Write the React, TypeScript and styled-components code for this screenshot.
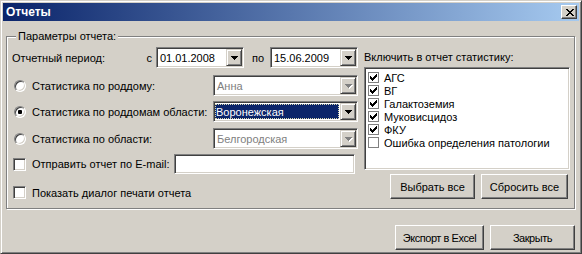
import * as React from 'react'
import styled, { createGlobalStyle, css } from 'styled-components'

const GlobalStyle = createGlobalStyle`
  html, body { margin: 0; padding: 0; background: #d4d0c8; }
  body {
    font-family: "Liberation Sans", Arial, sans-serif;
    font-size: 11px;
    color: #000;
  }
  * { box-sizing: border-box; }
`

const raised = css`
  border: 1px solid;
  border-color: #fff #404040 #404040 #fff;
  box-shadow: inset -1px -1px 0 #808080;
  background: #d4d0c8;
`

const sunken = css`
  border: 1px solid;
  border-color: #808080 #fff #fff #808080;
  box-shadow: inset 1px 1px 0 #404040, inset -1px -1px 0 #d4d0c8;
`

function Pixels({ rows, color, w, h }: { rows: number[][][]; color: string; w: number; h: number }) {
  return (
    <svg width={w} height={h} viewBox={`0 0 ${w} ${h}`} shapeRendering="crispEdges">
      {rows.map((runs, y) =>
        runs.map(([x, len], i) => <rect key={`${y}-${i}`} x={x} y={y} width={len} height={1} fill={color} />)
      )}
    </svg>
  )
}

const CHECK = [[[6, 1]], [[5, 2]], [[0, 1], [4, 3]], [[0, 2], [3, 3]], [[0, 5]], [[1, 3]], [[2, 1]]]
const CROSS = [[[0, 2], [6, 2]], [[1, 2], [5, 2]], [[2, 4]], [[3, 2]], [[2, 4]], [[1, 2], [5, 2]], [[0, 2], [6, 2]]]
const ARROW = [[[0, 7]], [[1, 5]], [[2, 3]], [[3, 1]]]

const Window = styled.div`
  width: 582px;
  height: 254px;
  display: flex;
  flex-direction: column;
  background: #d4d0c8;
  border: 1px solid;
  border-color: #d4d0c8 #404040 #404040 #d4d0c8;
  box-shadow: inset 1px 1px 0 #fff, inset -1px -1px 0 #808080;
  padding: 2px;
`

const TitleBar = styled.div`
  height: 18px;
  display: flex;
  align-items: center;
  justify-content: space-between;
  padding: 0 2px 0 3px;
  background: linear-gradient(to right, #0a246a, #a6caf0);
`

const TitleText = styled.span`
  color: #fff;
  font-weight: bold;
  font-size: 12px;
`

const CloseButton = styled.div`
  ${raised};
  width: 16px;
  height: 14px;
  display: flex;
  align-items: center;
  justify-content: center;
  padding-left: 1px;
`

const Body = styled.div`
  flex: 1;
  display: flex;
  flex-direction: column;
  padding: 8px 4px 0 3px;
`

const Group = styled.fieldset`
  margin: 0;
  padding: 4px 4px 5px 5px;
  border: 1px solid #808080;
  box-shadow: inset 1px 1px 0 #fff, 1px 1px 0 #fff;
  min-width: 0;
`

const Legend = styled.legend`
  margin-left: 4px;
  padding: 0 2px;
  line-height: 14px;
  background: #d4d0c8;
`

const Columns = styled.div`
  display: flex;
  gap: 6px;
`

const LeftColumn = styled.div`
  width: 346px;
  display: flex;
  flex-direction: column;
  gap: 5px;
`

const RightColumn = styled.div`
  width: 206px;
  display: flex;
  flex-direction: column;
`

const Row = styled.div<{ $h?: number; $top?: number }>`
  height: ${p => p.$h ?? 21}px;
  margin-top: ${p => p.$top ?? 0}px;
  display: flex;
  align-items: center;
`

const PeriodLabel = styled.span`
  flex: 1;
`

const Sep = styled.span<{ $gap: number; $left?: number }>`
  margin-left: ${p => p.$left ?? 0}px;
  margin-right: ${p => p.$gap}px;
`

const Choice = styled.label<{ $pad?: number }>`
  flex: 1;
  display: flex;
  align-items: center;
  gap: 6px;
  padding-left: ${p => p.$pad ?? 0}px;
`

const RadioCircle = styled.span`
  width: 12px;
  height: 12px;
  border-radius: 50%;
  border: 1px solid;
  border-color: #808080 #fff #fff #808080;
  box-shadow: inset 1px 1px 0 #404040, inset -1px -1px 0 #d4d0c8;
  background: #fff;
  display: flex;
  align-items: center;
  justify-content: center;
`

const RadioDot = styled.span`
  width: 4px;
  height: 4px;
  border-radius: 1px;
  background: #000;
`

const CheckBox = styled.span`
  ${sunken};
  width: 13px;
  height: 13px;
  background: #fff;
  flex: none;
`

const ComboBox = styled.div<{ $w: number }>`
  ${sunken};
  width: ${p => p.$w}px;
  height: 21px;
  padding: 1px;
  display: flex;
  background: #fff;
  flex: none;
`

const ComboText = styled.div<{ $disabled?: boolean; $selected?: boolean }>`
  flex: 1;
  display: flex;
  align-items: center;
  padding-left: 2px;
  color: ${p => (p.$disabled ? '#808080' : '#000')};
  ${p =>
    p.$selected &&
    css`
      margin: 1px 1px 1px 0;
      padding-left: 1px;
      background: #0a246a;
      color: #fff;
      outline: 1px dotted #d8d8b0;
      outline-offset: -1px;
    `}
`

const DropButton = styled.div`
  width: 16px;
  height: 17px;
  border: 1px solid;
  border-color: #d4d0c8 #404040 #404040 #d4d0c8;
  box-shadow: inset 1px 1px 0 #fff, inset -1px -1px 0 #808080;
  background: #d4d0c8;
  display: flex;
  align-items: center;
  justify-content: center;
  padding-left: 1px;
`

const DisabledArrow = styled.span`
  display: flex;
  filter: drop-shadow(1px 1px 0 #fff);
`

const TextInput = styled.div`
  ${sunken};
  width: 181px;
  height: 20px;
  background: #fff;
  margin-left: auto;
  margin-right: 3px;
  flex: none;
`

const ListLabel = styled.div`
  height: 20px;
  line-height: 20px;
`

const CheckList = styled.div`
  ${sunken};
  height: 103px;
  background: #fff;
  padding: 3px 2px 0 3px;
  display: flex;
  flex-direction: column;
`

const ListItem = styled.div`
  height: 13px;
  display: flex;
  align-items: center;
  gap: 5px;
`

const FlatBox = styled.span`
  width: 11px;
  height: 11px;
  border: 1px solid #808080;
  background: #fff;
  display: flex;
  align-items: center;
  justify-content: center;
  flex: none;
`

const ButtonRow = styled.div<{ $top: number; $right: number }>`
  display: flex;
  justify-content: flex-end;
  gap: 6px;
  margin-top: ${p => p.$top}px;
  margin-right: ${p => p.$right}px;
`

const Button = styled.button<{ $w: number; $narrow?: boolean }>`
  ${raised};
  width: ${p => p.$w}px;
  height: 25px;
  padding: 0;
  font: inherit;
  color: #000;
  letter-spacing: ${p => (p.$narrow ? '-0.45px' : '0')};
`

function Combo({ w, value, disabled, selected }: { w: number; value: string; disabled?: boolean; selected?: boolean }) {
  return (
    <ComboBox $w={w}>
      <ComboText $disabled={disabled} $selected={selected}>{value}</ComboText>
      <DropButton>
        {disabled ? (
          <DisabledArrow>
            <Pixels rows={ARROW} color="#808080" w={7} h={4} />
          </DisabledArrow>
        ) : (
          <Pixels rows={ARROW} color="#000" w={7} h={4} />
        )}
      </DropButton>
    </ComboBox>
  )
}

function Radio({ checked, label }: { checked?: boolean; label: string }) {
  return (
    <Choice $pad={2}>
      <RadioCircle>{checked && <RadioDot />}</RadioCircle>
      {label}
    </Choice>
  )
}

const stats = [
  { name: 'АГС', on: true },
  { name: 'ВГ', on: true },
  { name: 'Галактоземия', on: true },
  { name: 'Муковисцидоз', on: true },
  { name: 'ФКУ', on: true },
  { name: 'Ошибка определения патологии', on: false },
]

export default function App() {
  return (
    <>
      <GlobalStyle />
      <Window>
        <TitleBar>
          <TitleText>Отчеты</TitleText>
          <CloseButton>
            <Pixels rows={CROSS} color="#000" w={8} h={7} />
          </CloseButton>
        </TitleBar>
        <Body>
          <Group>
            <Legend>Параметры отчета:</Legend>
            <Columns>
              <LeftColumn>
                <Row>
                  <PeriodLabel>Отчетный период:</PeriodLabel>
                  <Sep $gap={4}>с</Sep>
                  <Combo w={88} value="01.01.2008" />
                  <Sep $gap={6} $left={8}>по</Sep>
                  <Combo w={88} value="15.06.2009" />
                </Row>
                <Row $top={2}>
                  <Radio label="Статистика по роддому:" />
                  <Combo w={145} value="Анна" disabled />
                </Row>
                <Row>
                  <Radio checked label="Статистика по роддомам области:" />
                  <Combo w={145} value="Воронежская" selected />
                </Row>
                <Row $top={1}>
                  <Radio label="Статистика по области:" />
                  <Combo w={145} value="Белгородская" disabled />
                </Row>
                <Row $h={20}>
                  <Choice $pad={1}>
                    <CheckBox />
                    Отправить отчет по E-mail:
                  </Choice>
                  <TextInput />
                </Row>
                <Row $top={3}>
                  <Choice $pad={1}>
                    <CheckBox />
                    Показать диалог печати отчета
                  </Choice>
                </Row>
              </LeftColumn>
              <RightColumn>
                <ListLabel>Включить в отчет статистику:</ListLabel>
                <CheckList>
                  {stats.map(s => (
                    <ListItem key={s.name}>
                      <FlatBox>{s.on && <Pixels rows={CHECK} color="#000" w={7} h={7} />}</FlatBox>
                      {s.name}
                    </ListItem>
                  ))}
                </CheckList>
                <ButtonRow $top={4} $right={2}>
                  <Button $w={85}>Выбрать все</Button>
                  <Button $w={87}>Сбросить все</Button>
                </ButtonRow>
              </RightColumn>
            </Columns>
          </Group>
          <ButtonRow $top={16} $right={0}>
            <Button $w={89} $narrow>Экспорт в Excel</Button>
            <Button $w={85} $narrow>Закрыть</Button>
          </ButtonRow>
        </Body>
      </Window>
    </>
  )
}
